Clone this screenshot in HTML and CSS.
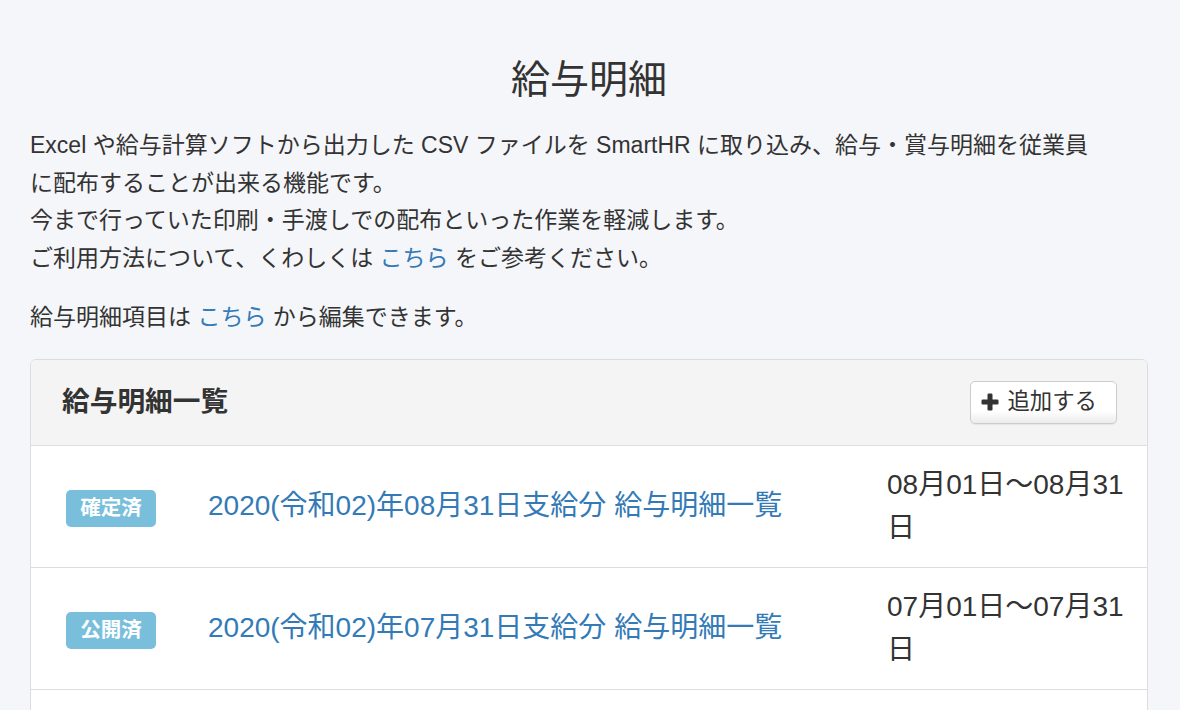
FILE: index.html
```html
<!DOCTYPE html>
<html lang="ja">
<head>
<meta charset="utf-8">
<title>給与明細</title>
<link rel="stylesheet" href="styles.css">
</head>
<body>
<div class="page">
  <h1 class="title">給与明細</h1>
  <p class="intro">Excel や給与計算ソフトから出力した CSV ファイルを SmartHR に取り込み、給与・賞与明細を従業員<br>に配布することが出来る機能です。<br>今まで行っていた印刷・手渡しでの配布といった作業を軽減します。<br>ご利用方法について、くわしくは <a href="#" class="link">こちら</a> をご参考ください。</p>
  <p class="note">給与明細項目は <a href="#" class="link">こちら</a> から編集できます。</p>

  <div class="panel">
    <div class="panel-head">
      <h2 class="panel-title">給与明細一覧</h2>
      <button class="btn" type="button">
        <svg class="plus" width="18" height="18" viewBox="0 0 18 18" aria-hidden="true"><rect x="6.5" y="0.5" width="5" height="17" rx="1.2" fill="#333"/><rect x="0.5" y="6.5" width="17" height="5" rx="1.2" fill="#333"/></svg>
        <span>追加する</span>
      </button>
    </div>
    <div class="row">
      <div class="cell-badge"><span class="badge">確定済</span></div>
      <div class="cell-link"><a href="#" class="row-link">2020(令和02)年08月31日支給分 給与明細一覧</a></div>
      <div class="cell-date">08月01日〜08月31日</div>
    </div>
    <div class="row">
      <div class="cell-badge"><span class="badge">公開済</span></div>
      <div class="cell-link"><a href="#" class="row-link">2020(令和02)年07月31日支給分 給与明細一覧</a></div>
      <div class="cell-date">07月01日〜07月31日</div>
    </div>
    <div class="row">
      <div class="cell-badge"><span class="badge">公開済</span></div>
      <div class="cell-link"><a href="#" class="row-link">2020(令和02)年06月30日支給分 給与明細一覧</a></div>
      <div class="cell-date">06月01日〜06月30日</div>
    </div>
  </div>
</div>
</body>
</html>
```

FILE: styles.css
```css
html, body {
  margin: 0;
  padding: 0;
  background: #f5f6fa;
}
body {
  font-family: "Liberation Sans", "Noto Sans CJK JP", sans-serif;
  color: #333;
  overflow: hidden;
}
.page {
  padding: 58px 32px 0 30px;
}
.title {
  margin: 0;
  text-align: center;
  font-size: 39px;
  font-weight: 400;
  line-height: 44px;
  color: #333;
}
.intro {
  margin: 25px 0 0;
  font-size: 23px;
  line-height: 37.5px;
}
.note {
  margin: 22px 0 0;
  font-size: 23px;
  line-height: 37.5px;
}
.link {
  color: #337ab7;
  text-decoration: none;
}
.panel {
  margin-top: 22px;
  background: #fff;
  border: 1px solid #ddd;
  border-radius: 6px;
  overflow: hidden;
}
.panel-head {
  height: 86px;
  box-sizing: border-box;
  display: flex;
  align-items: center;
  justify-content: space-between;
  padding: 0 30px 0 31px;
  background: #f4f4f4;
  border-bottom: 1px solid #ddd;
}
.panel-title {
  margin: 0;
  font-size: 27.7px;
  font-weight: 700;
  line-height: 40px;
  color: #333;
}
.btn {
  display: inline-flex;
  align-items: center;
  gap: 8px;
  height: 43px;
  box-sizing: border-box;
  padding: 0 19px 0 10px;
  border: 1px solid #ccc;
  border-radius: 5px;
  background: linear-gradient(#fff 70%, #ececec);
  box-shadow: 0 1px 1px rgba(0,0,0,0.06);
  font-family: inherit;
  font-size: 22.4px;
  line-height: 1;
  color: #333;
}
.plus {
  display: block;
  flex: none;
}
.row {
  display: grid;
  grid-template-columns: 142px 1fr 240px;
  align-items: center;
  padding: 17px 20px 18px 35px;
  border-top: 1px solid #ddd;
  font-size: 28px;
  line-height: 43px;
}
.panel-head + .row {
  border-top: 0;
}
.badge {
  display: inline-flex;
  align-items: center;
  justify-content: center;
  width: 90px;
  height: 37px;
  border-radius: 5px;
  background: #79bfdc;
  color: #fff;
  font-size: 20.5px;
  font-weight: 700;
  line-height: 1;
}
.row-link {
  color: #337ab7;
  text-decoration: none;
}
.cell-date {
  color: #333;
}
```
